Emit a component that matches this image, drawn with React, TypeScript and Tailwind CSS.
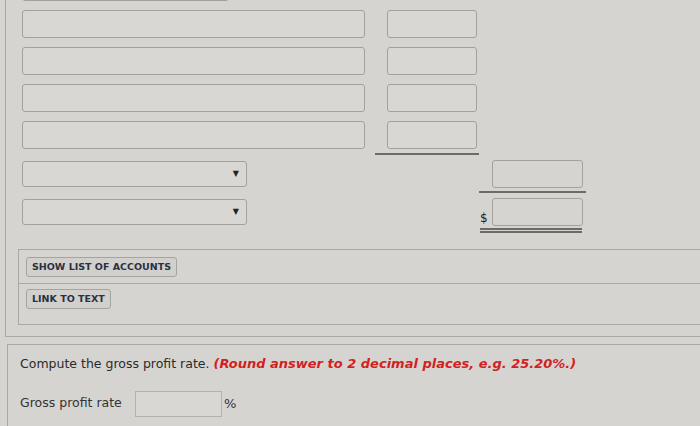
import React from "react";

const inputCls = "border border-[#a3a19d] rounded-[3px] bg-[#d9d7d3]";

function Dropdown({ w }: { w: string }) {
  return (
    <div className={`${inputCls} ${w} h-[26px] flex items-center justify-end pr-[7px]`}>
      <span className="text-[8px] leading-none text-[#222]">▼</span>
    </div>
  );
}

export default function App() {
  return (
    <div
      className="w-[700px] h-[426px] overflow-hidden bg-[#d6d4d0] relative"
      style={{ fontFamily: '"DejaVu Sans", Verdana, sans-serif' }}
    >
      <div className="ml-[5px] pt-px border-l border-b border-[#a9a8a5] h-[337px] pl-[16px] pr-0">
        {/* partial element at top */}
        <div className="w-[207px] h-[27px] mt-[-27px] border border-[#a3a19d] rounded-[3px]" />
        {/* rows 1-4 */}
        <div className="flex flex-col gap-[9px] mt-[9px]">
          {[0, 1, 2, 3].map((i) => (
            <div key={i} className="flex">
              <div className={`${inputCls} w-[343px] h-[28px]`} />
              <div className={`${inputCls} w-[90px] h-[28px] ml-[22px]`} />
            </div>
          ))}
        </div>
        <div className="ml-[353px] mt-[4px] w-[104px] h-[2px] bg-[#6c6b68]" />
        {/* rows 5-6 */}
        <div className="flex mt-[5px]">
          <div className="pt-[1px]">
            <Dropdown w="w-[225px]" />
          </div>
          <div className="ml-[232px] flex flex-col">
            <div className="ml-[13px] w-[91px] h-[28px] border border-[#a3a19d] rounded-[3px]" />
            <div className="mt-[3px] w-[107px] h-[2px] bg-[#6c6b68]" />
          </div>
        </div>
        <div className="flex mt-[5px]">
          <div className="pt-[1px]">
            <Dropdown w="w-[225px]" />
          </div>
          <div className="ml-[233px] flex flex-col">
            <div className="flex items-end">
              <span className="text-[12px] leading-none text-[#222] mb-[2px] w-[12px]">$</span>
              <div className="w-[91px] h-[28px] border border-[#a3a19d] rounded-[3px]" />
            </div>
            <div className="mt-[2px] w-[102px] h-[2px] bg-[#6c6b68]" />
            <div className="mt-[1px] w-[102px] h-[2px] bg-[#6c6b68]" />
          </div>
        </div>
        {/* inner box with buttons */}
        <div className="ml-[-4px] mt-[16px] border-t border-l border-b border-[#a9a8a5] h-[76px]">
          <div className="h-[34px] border-b border-[#a9a8a5] pl-[7px] pt-[7px] flex items-start">
            <button className="h-[20px] px-[5px] flex items-center border border-[#a6a4a0] rounded-[3px] bg-[#d2d0cc] text-[9.5px] font-bold text-[#2a3142] leading-none">
              SHOW LIST OF ACCOUNTS
            </button>
          </div>
          <div className="pl-[7px] pt-[5px] flex items-start">
            <button className="h-[20px] px-[5px] flex items-center border border-[#a6a4a0] rounded-[3px] bg-[#d2d0cc] text-[9.5px] font-bold text-[#2a3142] leading-none">
              LINK TO TEXT
            </button>
          </div>
        </div>
      </div>
      {/* bottom panel */}
      <div className="ml-[7px] mt-[7px] border-l border-t border-[#a9a8a5] h-[100px] pl-[12px] pt-[12px]">
        <div className="text-[12.5px] text-[#2a2a2a] leading-none">
          Compute the gross profit rate.{" "}
          <span className="text-[13px] text-[#d21f1f] font-bold italic">
            (Round answer to 2 decimal places, e.g. 25.20%.)
          </span>
        </div>
        <div className="flex items-center mt-[20px]">
          <span className="text-[12.5px] text-[#333] w-[115px]">Gross profit rate</span>
          <div className="w-[87px] h-[26px] border border-[#b3b1ad] bg-[#d9d7d3]" />
          <span className="text-[13px] text-[#333] ml-[2px]">%</span>
        </div>
      </div>
    </div>
  );
}
